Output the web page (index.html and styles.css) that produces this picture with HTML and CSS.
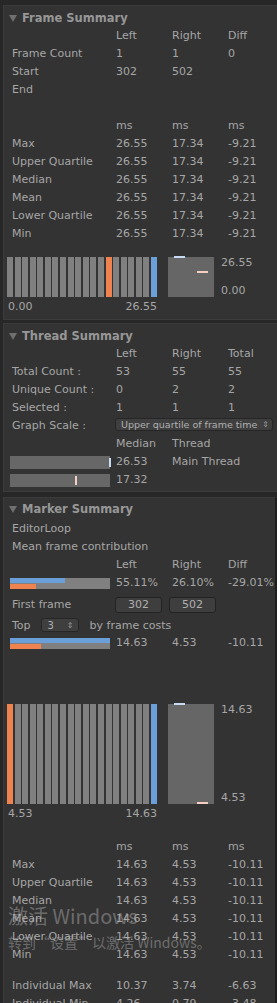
FILE: index.html
```html
<!DOCTYPE html>
<html lang="en">
<head>
<meta charset="UTF-8" />
<title>Profile Analyzer</title>
<link rel="stylesheet" href="styles.css">
</head>
<body>
    <div class="panel frame-panel">
        <div class="title"><span class="arrow"></span>Frame Summary</div>
        <div class="grid">
            <span></span><span>Left</span><span>Right</span><span>Diff</span>
            <span>Frame Count</span><span>1</span><span>1</span><span>0</span>
            <span>Start</span><span>302</span><span>502</span><span></span>
            <span>End</span><span></span><span></span><span></span>
            <span class="blank"></span><span></span><span></span><span></span>
            <span></span><span>ms</span><span>ms</span><span>ms</span>
            <span>Max</span><span>26.55</span><span>17.34</span><span>-9.21</span>
            <span>Upper Quartile</span><span>26.55</span><span>17.34</span><span>-9.21</span>
            <span>Median</span><span>26.55</span><span>17.34</span><span>-9.21</span>
            <span>Mean</span><span>26.55</span><span>17.34</span><span>-9.21</span>
            <span>Lower Quartile</span><span>26.55</span><span>17.34</span><span>-9.21</span>
            <span>Min</span><span>26.55</span><span>17.34</span><span>-9.21</span>
        </div>
        <div class="chart small-chart">
            <div class="hist">
                <div class="bars" id="bars1"></div>
                <div class="axis"><span>0.00</span><span>26.55</span></div>
            </div>
            <div class="boxplot">
                <div class="box">
                    <span class="mark mark-left" style="top: -1px"></span>
                    <span class="mark mark-right" style="top: 14px"></span>
                </div>
                <div class="box-labels"><span>26.55</span><span>0.00</span></div>
            </div>
        </div>
    </div>

    <div class="panel thread-panel">
        <div class="title"><span class="arrow"></span>Thread Summary</div>
        <div class="grid">
            <span></span><span>Left</span><span>Right</span><span>Total</span>
            <span>Total Count :</span><span>53</span><span>55</span><span>55</span>
            <span>Unique Count :</span><span>0</span><span>2</span><span>2</span>
            <span>Selected :</span><span>1</span><span>1</span><span>1</span>
            <span>Graph Scale :</span>
            <span class="wide"><span class="dropdown scale-select">Upper quartile of frame time <i>&#8661;</i></span></span>
            <span></span><span>Median</span><span>Thread</span><span></span>
            <span class="cell-bar"><span class="tbar"><span class="tick tick-left" style="left: 99px"></span></span></span><span>26.53</span><span>Main Thread</span><span></span>
            <span class="cell-bar"><span class="tbar"><span class="tick tick-right" style="left: 65px"></span></span></span><span>17.32</span><span></span><span></span>
        </div>
    </div>

    <div class="panel marker-panel">
        <div class="title"><span class="arrow"></span>Marker Summary</div>
        <div class="line name">EditorLoop</div>
        <div class="line">Mean frame contribution</div>
        <div class="grid">
            <span></span><span>Left</span><span>Right</span><span>Diff</span>
            <span class="cell-bar"><span class="cbar"><span class="c-left" style="width: 55%"></span><span class="c-right" style="width: 26%"></span></span></span><span>55.11%</span><span>26.10%</span><span>-29.01%</span>
        </div>
        <div class="grid button-row">
            <span>First frame</span>
            <span class="wide buttons"><span class="btn">302</span><span class="btn">502</span></span>
        </div>
        <div class="top-row">
            <span>Top</span>
            <span class="dropdown top-select">3 <i>&#8661;</i></span>
            <span>by frame costs</span>
        </div>
        <div class="grid">
            <span class="cell-bar"><span class="cbar"><span class="c-left" style="width: 100%"></span><span class="c-right" style="width: 31%"></span></span></span><span>14.63</span><span>4.53</span><span>-10.11</span>
        </div>
        <div class="chart big-chart">
            <div class="hist">
                <div class="bars" id="bars2"></div>
                <div class="axis"><span>4.53</span><span>14.63</span></div>
            </div>
            <div class="boxplot">
                <div class="box">
                    <span class="mark mark-left" style="top: -1px"></span>
                    <span class="mark mark-right" style="bottom: 0"></span>
                </div>
                <div class="box-labels"><span>14.63</span><span>4.53</span></div>
            </div>
        </div>
        <div class="grid stats">
            <span></span><span>ms</span><span>ms</span><span>ms</span>
            <span>Max</span><span>14.63</span><span>4.53</span><span>-10.11</span>
            <span>Upper Quartile</span><span>14.63</span><span>4.53</span><span>-10.11</span>
            <span>Median</span><span>14.63</span><span>4.53</span><span>-10.11</span>
            <span>Mean</span><span>14.63</span><span>4.53</span><span>-10.11</span>
            <span>Lower Quartile</span><span>14.63</span><span>4.53</span><span>-10.11</span>
            <span>Min</span><span>14.63</span><span>4.53</span><span>-10.11</span>
        </div>
        <div class="grid indiv">
            <span>Individual Max</span><span>10.37</span><span>3.74</span><span>-6.63</span>
            <span>Individual Min</span><span>4.26</span><span>0.79</span><span>-3.48</span>
        </div>
    </div>

    <div class="watermark">
        <div class="wm-big">激活 Windows</div>
        <div class="wm-small">转到“设置”以激活 Windows。</div>
    </div>

<script>
    // histogram bars, highlight left/right frame
    function fillBars(id, leftIndex, rightIndex) {
        const holder = document.getElementById(id);
        for (let i = 0; i < 20; i++) {
            const bar = document.createElement('span');
            bar.className = 'bar';
            if (i === leftIndex) bar.classList.add('bar-left');
            if (i === rightIndex) bar.classList.add('bar-right');
            holder.appendChild(bar);
        }
    }
    fillBars('bars1', 13, 19);
    fillBars('bars2', 0, 19);
</script>
</body>
</html>
```

FILE: styles.css
```css
:root {
    --text: #a6a6a6;
    --title: #979797;
    --panel: #333333;
    --orange: #ee8350;
    --blue: #6a9fd9;
    --bar: #808080;
    --box: #666666;
}

body, html {
    margin: 0;
    padding: 0;
    height: 100%;
    overflow: hidden;
    background: #272727;
    font-family: "DejaVu Sans", Arial, sans-serif;
    font-size: 11px;
    color: var(--text);
}

body {
    padding-top: 5px;
    position: relative;
}

.panel {
    margin: 0 0 3px 3px;
    background: var(--panel);
    border: 1px solid #3b3b3b;
    border-right: none;
    padding: 2px 0 4px 0;
    box-sizing: border-box;
}

.frame-panel {
    height: 315px;
}

.thread-panel {
    height: 169px;
    margin-bottom: 5px;
}

.marker-panel {
    margin-bottom: 0;
    border-right: 2px solid #1e1e1e;
}

.title {
    height: 18px;
    line-height: 18px;
    padding-left: 5px;
    margin-top: 1px;
    font-weight: bold;
    font-size: 11.5px;
    color: var(--title);
    display: flex;
    align-items: center;
}

.marker-panel .title {
    margin-top: 0;
}

.arrow {
    width: 0;
    height: 0;
    border-left: 4px solid transparent;
    border-right: 4px solid transparent;
    border-top: 7px solid #6f6f6f;
    margin-right: 5px;
}

.grid {
    display: grid;
    grid-template-columns: 104px 56px 56px 1fr;
    padding-left: 8px;
    line-height: 18px;
    white-space: nowrap;
}

.grid > span {
    height: 18px;
}

.wide {
    grid-column: 2 / 5;
    display: flex;
    align-items: center;
}

.line {
    padding-left: 8px;
    line-height: 18px;
}

.name {
    margin-top: 2px;
}

/* charts */
.chart {
    display: flex;
    align-items: flex-start;
    padding-left: 3px;
}

.small-chart {
    margin-top: 14px;
}

.big-chart {
    margin-top: 52px;
}

.hist {
    width: 150px;
}

.bars {
    display: grid;
    grid-template-columns: repeat(20, 1fr);
    column-gap: 1.6px;
    height: 40px;
}

.big-chart .bars {
    height: 100px;
}

.bar {
    background: var(--bar);
}

.bar-left {
    background: var(--orange);
}

.bar-right {
    background: var(--blue);
}

.axis {
    display: flex;
    justify-content: space-between;
    line-height: 18px;
    padding-left: 1px;
    margin-top: 1px;
}

.boxplot {
    display: flex;
    margin-left: 11px;
}

.box {
    position: relative;
    width: 46px;
    height: 40px;
    background: var(--box);
}

.big-chart .box {
    height: 100px;
}

.mark {
    position: absolute;
    height: 2px;
    width: 11px;
}

.mark-left {
    left: 6px;
    background: #c6daf3;
}

.mark-right {
    left: 29px;
    background: #f6cfc4;
}

.box-labels {
    display: flex;
    flex-direction: column;
    justify-content: space-between;
    margin-left: 7px;
    line-height: 12px;
}

/* thread bars */
.cell-bar {
    display: flex;
    align-items: center;
    margin-left: -2px;
}

.tbar {
    position: relative;
    display: block;
    width: 100px;
    height: 13px;
    background: #676767;
}

.tick {
    position: absolute;
    top: 2px;
    width: 2px;
    height: 9px;
}

.tick-left {
    background: #c6daf3;
}

.tick-right {
    background: #f6cfc4;
}

.cbar {
    position: relative;
    display: block;
    width: 100px;
    height: 11px;
    background: var(--bar);
}

.cbar span {
    position: absolute;
    left: 0;
    height: 5px;
}

.c-left {
    top: 0;
    background: var(--blue);
}

.c-right {
    bottom: 0;
    background: var(--orange);
}

/* controls */
.dropdown {
    display: flex;
    align-items: center;
    justify-content: space-between;
    box-sizing: border-box;
    height: 13px;
    background: #3f3f3f;
    border: 1px solid #262626;
    border-radius: 3px;
    font-size: 9.5px;
    color: #b0b0b0;
    padding: 0 3px 0 5px;
}

.dropdown i {
    font-style: normal;
    font-size: 8px;
    color: #9a9a9a;
}

.scale-select {
    width: 158px;
    margin-left: -1px;
    margin-top: -3px;
}

.button-row {
    margin-top: 3px;
    line-height: 20px;
}

.button-row > span {
    height: 20px;
}

.buttons {
    gap: 7px;
    margin-left: -1px;
}

.btn {
    width: 47px;
    height: 16px;
    box-sizing: border-box;
    background: #3e3e3e;
    border: 1px solid #222;
    border-radius: 3px;
    text-align: center;
    line-height: 14px;
    color: #b0b0b0;
}

.top-row {
    display: flex;
    align-items: center;
    height: 18px;
    margin-top: 1px;
    padding-left: 8px;
}

.top-select {
    width: 38px;
    height: 14px;
    margin: 0 11px 0 10px;
    font-size: 10px;
    padding: 0 4px 0 6px;
}

.stats {
    margin-top: 15px;
}

.indiv {
    margin-top: 13px;
}

/* windows activation watermark */
.watermark {
    position: absolute;
    left: 8px;
    top: 904px;
    color: rgba(200, 200, 200, 0.4);
    font-family: "Noto Sans CJK SC", "Noto Sans", sans-serif;
    pointer-events: none;
}

.wm-big {
    font-size: 20px;
    line-height: 24px;
}

.wm-small {
    font-size: 14px;
    line-height: 18px;
    margin-top: 5px;
}
```
